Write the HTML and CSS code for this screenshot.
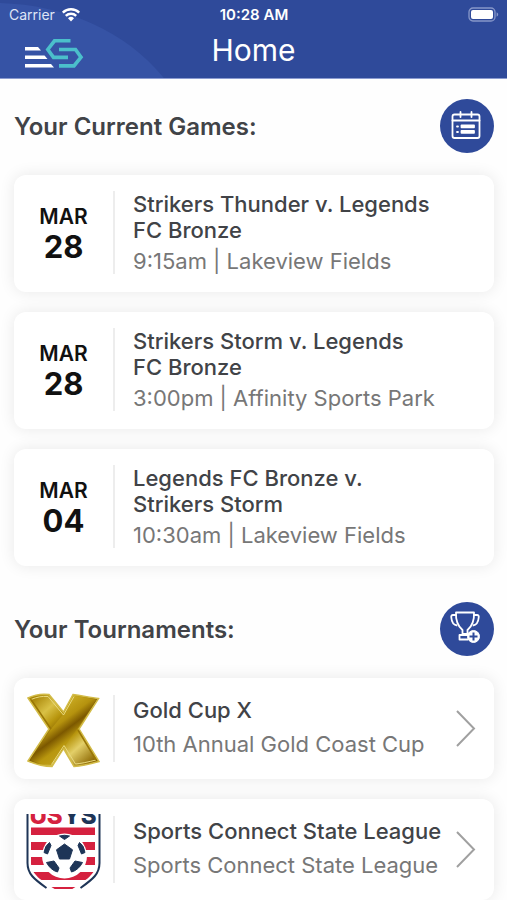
FILE: index.html
```html
<!DOCTYPE html>
<html lang="en">
<head>
    <meta charset="UTF-8">
    <meta name="viewport" content="width=device-width, initial-scale=1.0">
    <title>Home</title>
    <link rel="stylesheet" href="styles.css">
</head>
<body>

    <div class="app">
        <header class="header">
            <svg class="header-curve" viewBox="0 0 166 79" aria-hidden="true">
                <path d="M0 3C66 5 127 31 166 79H0z" fill="#3653a5"/>
            </svg>

            <div class="status-bar">
                <span class="carrier">
                    Carrier
                    <svg width="20" height="15" viewBox="0 0 20 15" aria-hidden="true">
                        <g fill="none" stroke="#fff" stroke-width="2.4">
                            <path d="M1.8 5.6a11.8 11.8 0 0 1 16.4 0"/>
                            <path d="M4.8 8.9a7.4 7.4 0 0 1 10.4 0"/>
                        </g>
                        <path d="M10 14.4l-3-3.1a4.3 4.3 0 0 1 6 0z" fill="#fff"/>
                    </svg>
                </span>
                <span class="time">10:28 AM</span>
                <svg class="battery" width="31" height="15" viewBox="0 0 31 15" aria-hidden="true">
                    <rect x="1" y="1" width="26" height="13" rx="4" fill="none" stroke="#8797c9" stroke-width="1.3"/>
                    <rect x="3" y="3" width="22" height="9" rx="2" fill="#fff"/>
                    <path d="M28.6 5.2v4.6c1-.5 1.6-1.3 1.6-2.3s-.6-1.8-1.6-2.3z" fill="#8797c9"/>
                </svg>
            </div>

            <div class="nav-bar">
                <svg class="logo" width="60" height="31" viewBox="0 0 60 31" aria-hidden="true">
                    <g fill="#fff">
                        <path d="M1 9h13l3 3.5H1z"/>
                        <path d="M1 17.5h19.500l3 3.5H1z"/>
                        <path d="M1 26h26l3 3.5H1z"/>
                    </g>
                    <g fill="none" stroke="#4bbfcb" stroke-width="3.6">
                        <path d="M46.500 2.800H30.500L23.800 11.500l5.700 7.900H44"/>
                        <path d="M35 11.500H51.500L57 19.200l-7 8.700H35"/>
                    </g>
                </svg>
                <h1>Home</h1>
            </div>
        </header>

        <main class="content">
            <section class="section">
                <div class="section-head">
                    <h2>Your Current Games:</h2>
                    <button class="round-button" type="button" aria-label="Schedule">
                        <svg width="54" height="54" viewBox="0 0 54 54" fill="none" stroke="#fff" stroke-width="1.8" stroke-linecap="round" stroke-linejoin="round">
                            <rect x="12.5" y="15.5" width="27" height="23.5" rx="2"/>
                            <path d="M12.5 21.5h27M20.5 13v5M31.5 13v5"/>
                            <path d="M17 27.500h1M17 33h1"/>
                            <rect x="21.5" y="26.5" width="12.5" height="1.8"/>
                            <rect x="21.5" y="32" width="12.5" height="1.8"/>
                        </svg>
                    </button>
                </div>

                <article class="card">
                    <div class="date">
                        <span class="month">MAR</span>
                        <span class="day">28</span>
                    </div>
                    <div class="info">
                        <h3>Strikers Thunder v. Legends FC Bronze</h3>
                        <p>9:15am | Lakeview Fields</p>
                    </div>
                </article>

                <article class="card">
                    <div class="date">
                        <span class="month">MAR</span>
                        <span class="day">28</span>
                    </div>
                    <div class="info">
                        <h3>Strikers Storm v. Legends FC Bronze</h3>
                        <p>3:00pm | Affinity Sports Park</p>
                    </div>
                </article>

                <article class="card">
                    <div class="date">
                        <span class="month">MAR</span>
                        <span class="day">04</span>
                    </div>
                    <div class="info">
                        <h3>Legends FC Bronze v. Strikers Storm</h3>
                        <p>10:30am | Lakeview Fields</p>
                    </div>
                </article>
            </section>

            <section class="section">
                <div class="section-head">
                    <h2>Your Tournaments:</h2>
                    <button class="round-button" type="button" aria-label="Add tournament">
                        <svg width="54" height="54" viewBox="0 0 54 54" fill="none" stroke="#fff" stroke-width="1.8" stroke-linejoin="round">
                            <path d="M16 10.500h18c.5 9-1.800 13.500-6.500 17.500v4h-5v-4c-4.700-4-7-8.500-6.500-17.500z"/>
                            <path d="M16 13h-3c-1.500 0-2 1-1.700 2.500.3 4 1.500 7.500 6 8M34 13h3c1.500 0 2 1 1.700 2.500-.3 4-1.500 7.500-6 8"/>
                            <path d="M28 33h-8.500v4.500H28"/>
                            <circle cx="33.5" cy="34.500" r="6" fill="#fff" stroke-width="1"/>
                            <path d="M33.500 30.500v8M29.500 34.500h8" stroke="#2f4a9a" stroke-width="2"/>
                        </svg>
                    </button>
                </div>

                <a class="card tournament" href="#">
                    <span class="thumb">
                        <svg width="75" height="75" viewBox="0 0 75 75" aria-hidden="true">
                            <defs>
                                <linearGradient id="gold" gradientUnits="userSpaceOnUse" x1="8" y1="5" x2="66" y2="70">
                                    <stop offset="0" stop-color="#a88508"/>
                                    <stop offset=".2" stop-color="#d9c146"/>
                                    <stop offset=".34" stop-color="#b8960e"/>
                                    <stop offset=".5" stop-color="#7c5800"/>
                                    <stop offset=".62" stop-color="#b8960e"/>
                                    <stop offset=".76" stop-color="#e3cf68"/>
                                    <stop offset="1" stop-color="#8a6500"/>
                                </linearGradient>
                                <linearGradient id="goldArm" gradientUnits="userSpaceOnUse" x1="25" y1="20" x2="52" y2="56">
                                    <stop offset="0" stop-color="#c9aa22"/>
                                    <stop offset=".3" stop-color="#b5920e"/>
                                    <stop offset=".5" stop-color="#7c5800"/>
                                    <stop offset=".72" stop-color="#b8960e"/>
                                    <stop offset="1" stop-color="#c0a01a"/>
                                </linearGradient>
                            </defs>
                            <path d="M2 5C8 2 15 .5 23 1.500L37.500 19 47 1.500C57 3 65 4.500 72.500 5.500L53 36 73 68.500C64 71 56 73 48 73.500L37.500 55.500 26 73.500C18 73.500 9 71 2 68L23 36z" fill="url(#gold)" stroke="#d3bc48" stroke-width="1.5"/>
                            <path d="M48 3C56 4 63 5 70.500 6.500L51 36 25.500 72C18 71.500 11 70 4 67L25 36 37.500 21z" fill="url(#goldArm)"/>
                            <path d="M5 6.500C11 4 16 3 22 3.500L37.500 22 48 3.500M70 67C62 69 55 70.500 49.500 71L38 52.500 25.500 71.500" fill="none" stroke="#e9da80" stroke-width="1"/>
                            <path d="M52 37L70 67M25 36L5 6.500" fill="none" stroke="#9a7605" stroke-width="1.5"/>
                        </svg>
                    </span>
                    <span class="info">
                        <strong>Gold Cup X</strong>
                        <span class="sub">10th Annual Gold Coast Cup</span>
                    </span>
                    <svg class="chevron" width="20" height="37" viewBox="0 0 20 37" fill="none" stroke="#a0a0a0" stroke-width="2" aria-hidden="true">
                        <path d="M1 1l17 17.5L1 36"/>
                    </svg>
                </a>

                <a class="card tournament" href="#">
                    <span class="thumb">
                        <svg width="75" height="75" viewBox="0 0 75 75" aria-hidden="true">
                            <defs>
                                <clipPath id="shield">
                                    <path d="M5 0h65v49c0 14-16 20-32.5 32C21 69 5 63 5 49z"/>
                                </clipPath>
                            </defs>
                            <g clip-path="url(#shield)">
                                <path d="M5 13.500h64v7.500H5zM5 28h64v8H5zM5 43h64v8H5zM5 58h64v8H5zM5 73h64v8H5z" fill="#d5213f"/>
                            </g>
                            <path d="M1.500 0v49C1.500 60 8 65 20.500 74M73.500 0v49C73.500 60 67 65 54.500 74" fill="none" stroke="#1e3557" stroke-width="2"/>
                            <text class="badge-text" x="37" y="10" text-anchor="middle"><tspan fill="#d5213f">US</tspan><tspan fill="#1e3557">YS</tspan></text>
                            <circle cx="38.5" cy="42" r="22.5" fill="#fff"/>
                            <g fill="#1e3557" stroke="#1e3557" stroke-width="1" stroke-linejoin="round">
                                <path d="M38.500 30l8 5.800-3 9.200h-10L30.500 35.800z"/>
                                <path d="M33.500 22q5-1.500 10 0l-5 3.500z"/>
                                <path d="M18 38.500q1-7 5.500-10l1.500 3-3.500 8.500z"/>
                                <path d="M59 38.500q-1-7-5.500-10l-1.500 3 3.500 8.500z"/>
                                <path d="M20.500 48.500l7.500-1.500 5 7-1.500 4q-7-2-11-9.500z"/>
                                <path d="M56.500 48.500l-7.500-1.500-5 7 1.500 4q7-2 11-9.500z"/>
                            </g>
                        </svg>
                    </span>
                    <span class="info">
                        <strong>Sports Connect State League</strong>
                        <span class="sub">Sports Connect State League</span>
                    </span>
                    <svg class="chevron" width="20" height="37" viewBox="0 0 20 37" fill="none" stroke="#a0a0a0" stroke-width="2" aria-hidden="true">
                        <path d="M1 1l17 17.5L1 36"/>
                    </svg>
                </a>
            </section>
        </main>
    </div>

</body>
</html>
```
FILE: styles.css
```css
* {
    box-sizing: border-box;
}

body {
    margin: 0;
    font-family: Inter, "Liberation Sans", sans-serif;
    background-color: #fefefe;
    color: #414347;
}

h1, h2, h3, p {
    margin: 0;
}

.app {
    display: flex;
    flex-direction: column;
    height: 100vh;
}

/* Header */
.header {
    position: relative;
    flex-shrink: 0;
    background-color: #2f4a9a;
    border-bottom: 1px solid #8b9bd0;
    color: #fff;
}

.header-curve {
    position: absolute;
    left: 0;
    top: 0;
    height: 100%;
}

.status-bar,
.nav-bar {
    position: relative;
    display: grid;
    grid-template-columns: 1fr auto 1fr;
    align-items: center;
}

.status-bar {
    height: 28px;
    padding: 0 8px 0 9px;
    font-size: 14px;
}

.carrier {
    display: flex;
    align-items: center;
    gap: 6px;
    color: #dfe5f6;
}

.time {
    font-size: 15px;
    font-weight: 600;
}

.battery {
    justify-self: end;
}

.nav-bar {
    height: 50px;
    padding: 0 24px;
}

.nav-bar h1 {
    grid-column: 2;
    padding-bottom: 6px;
    font-size: 30px;
    font-weight: 400;
    line-height: 40px;
}

/* Content */
.content {
    flex: 1;
    min-height: 0;
    overflow-y: auto;
    scrollbar-width: none;
    padding: 20px 13px 20px 14px;
}

.section {
    display: flex;
    flex-direction: column;
    gap: 20px;
    margin-bottom: 36px;
}

.section-head {
    display: flex;
    justify-content: space-between;
    align-items: center;
    margin-bottom: 2px;
}

.section-head h2 {
    font-size: 24px;
    font-weight: 600;
}

.round-button {
    width: 54px;
    height: 54px;
    padding: 0;
    border: none;
    border-radius: 50%;
    background-color: #2f4a9a;
    cursor: pointer;
}

.round-button svg {
    display: block;
}

/* Cards */
.card {
    display: flex;
    padding: 16px 16px 18px 0;
    border-radius: 12px;
    background-color: #fff;
    box-shadow: 0 0 16px rgba(0, 0, 0, 0.09);
    color: inherit;
    text-decoration: none;
}

.date,
.thumb {
    display: flex;
    flex-direction: column;
    flex-shrink: 0;
    align-items: center;
    justify-content: center;
    width: 101px;
    border-right: 2px solid #ededed;
    color: #111;
}

.date {
    padding-top: 2px;
}

.month {
    font-size: 21px;
    font-weight: 600;
    line-height: 26px;
}

.day {
    font-size: 31px;
    font-weight: 700;
    line-height: 34px;
}

.info {
    flex: 1;
    min-width: 0;
    padding-left: 18px;
}

.info h3,
.info strong {
    display: block;
    font-size: 22px;
    font-weight: 500;
    line-height: 26px;
}

.info p,
.sub {
    display: block;
    margin-top: 5px;
    font-size: 22px;
    line-height: 26px;
    color: #777;
}

.card h3 {
    max-width: 300px;
}

.tournament {
    align-items: center;
    padding: 17px 18px 17px 0;
}

.tournament .info {
    padding-bottom: 4px;
    white-space: nowrap;
}

.tournament .sub {
    margin-top: 8px;
}

.thumb {
    height: 67px;
    padding-top: 4px;
}

.thumb svg {
    flex-shrink: 0;
}

.chevron {
    flex-shrink: 0;
}

.badge-text {
    font-size: 24px;
    font-weight: 800;
}
```
